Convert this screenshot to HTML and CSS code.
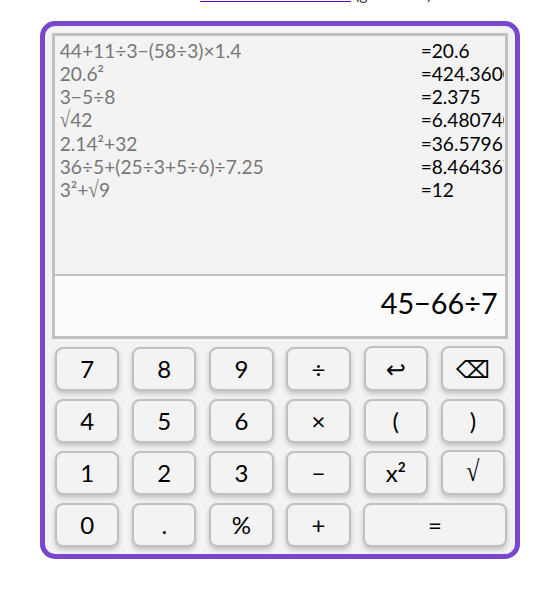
FILE: index.html
```html
<!DOCTYPE html>
<html lang="en">
<head>
<meta charset="utf-8">
<title>Calculator</title>
<link rel="stylesheet" href="styles.css">
</head>
<body>
<p class="intro"><span class="lead">a small calculator that is based on</span><a class="link" href="#">the calculator tutorial</a><span class="tail">(git source).</span></p>
<main class="calculator">
  <section class="display">
    <div class="history">
      <div class="entry"><span class="expr">44+11÷3−(58÷3)×1.4</span><span class="result">=20.6</span></div>
      <div class="entry"><span class="expr">20.6²</span><span class="result">=424.36000</span></div>
      <div class="entry"><span class="expr">3−5÷8</span><span class="result">=2.375</span></div>
      <div class="entry"><span class="expr"><span class="root">√</span>42</span><span class="result">=6.4807406</span></div>
      <div class="entry"><span class="expr">2.14²+32</span><span class="result">=36.5796</span></div>
      <div class="entry"><span class="expr">36÷5+(25÷3+5÷6)÷7.25</span><span class="result">=8.464367</span></div>
      <div class="entry"><span class="expr">3²+<span class="root">√</span>9</span><span class="result">=12</span></div>
    </div>
    <div class="current">45−66÷7</div>
  </section>
  <section class="keys">
    <button>7</button><button>8</button><button>9</button><button>÷</button><button class="tall">↩</button><button class="tall">⌫</button>
    <button>4</button><button>5</button><button>6</button><button>×</button><button>(</button><button>)</button>
    <button>1</button><button>2</button><button>3</button><button>−</button><button>x<sup>2</sup></button><button class="tall"><span class="root">√</span></button>
    <button>0</button><button>.</button><button>%</button><button>+</button><button class="equals">=</button>
  </section>
</main>
</body>
</html>
```

FILE: styles.css
```css
* { box-sizing: border-box; }
body {
  margin: 0;
  height: 597px;
  overflow: hidden;
  background: #fff;
  font-family: Lato, "DejaVu Sans", sans-serif;
  color: #000;
}
.intro {
  display: flex;
  height: 21px;
  margin: 0;
  font-size: 16px;
  line-height: 20px;
  white-space: nowrap;
  color: #444;
}
.intro > * { margin-top: -16px; }
.lead { display: flex; justify-content: flex-end; width: 200px; padding-right: 4px; font-size: 15px; }
.link { width: 151px; text-align-last: justify; color: #5a00d6; text-decoration-thickness: 1px; }
.tail { margin-left: 4px; }
.calculator {
  width: 480px;
  height: 538px;
  margin-left: 40px;
  padding: 7px;
  border: 5px solid #7946cf;
  border-radius: 15px;
  background: #f3f3f3;
}
.display {
  height: 306px;
  border: 3px solid #c0c0c0;
}
.history {
  height: 240px;
  padding: 3px 1px 0 4.7px;
  border-bottom: 2px solid #c0c0c0;
}
.entry {
  display: flex;
  height: 23.15px;
  font-size: 19.1px;
  line-height: 23.15px;
  white-space: nowrap;
}
.expr { width: 361px; color: #777; font-size: 19.2px; }
.result { flex: 1; min-width: 0; overflow: hidden; }
.root {
  display: inline-block;
  font-family: "Liberation Serif", serif;
  line-height: 1;
  transform: scaleY(1.2);
  transform-origin: 50% 85%;
}
.current {
  height: 60px;
  padding-right: 7.4px;
  background: #fcfcfc;
  font-size: 28.8px;
  line-height: 54px;
  text-align: right;
}
.keys {
  display: grid;
  grid-template-columns: repeat(6, 64.3px);
  grid-auto-rows: 44px;
  gap: 8px 12.85px;
  padding: 8px 3px 0;
}
button {
  height: 44px;
  padding: 0;
  border: 2px solid #c0c0c0;
  border-radius: 8px;
  background: #f3f3f3;
  box-shadow: 0 3px 5px rgba(0, 0, 0, .2);
  color: #000;
  font: 24px/1 Lato, "DejaVu Sans", sans-serif;
}
.tall { height: 45px; margin-top: -1px; }
.equals { grid-column: span 2; margin: 0 -1.9px 0 -0.6px; }
sup { position: relative; top: -1px; font-size: 13.5px; font-weight: 700; line-height: 0; }
```
